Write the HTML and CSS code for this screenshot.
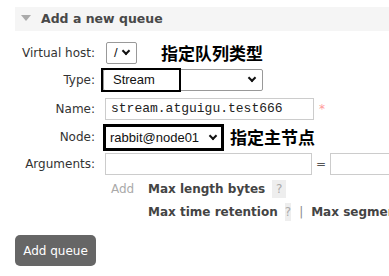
FILE: index.html
```html
<!DOCTYPE html>
<html>
<head>
    <meta charset="UTF-8">
    <title>Add a new queue</title>
    <link rel="stylesheet" href="styles.css">
</head>
<body>
    <div class="section">
        <h2 class="section-title"><span class="arrow"></span>Add a new queue</h2>
        <form class="queue-form">
            <div class="row r-vhost">
                <label>Virtual host:</label>
                <span class="select small">/<span class="chev"></span></span>
                <span class="note">指定队列类型</span>
            </div>
            <div class="row r-type">
                <label>Type:</label>
                <span class="select wide">Stream<span class="chev"></span><span class="mark"></span></span>
            </div>
            <div class="row r-name">
                <label>Name:</label>
                <span class="text-input name">stream.atguigu.test666</span>
                <span class="req">*</span>
            </div>
            <div class="row r-node">
                <label>Node:</label>
                <span class="select node">rabbit@node01<span class="chev"></span></span>
                <span class="note near">指定主节点</span>
            </div>
            <div class="row r-args">
                <label>Arguments:</label>
                <span class="text-input arg"></span>
                <span class="eq">=</span>
                <span class="text-input arg2"></span>
            </div>
            <div class="row hint">
                <label></label>
                <span class="add">Add</span>
                <b>Max length bytes</b>
                <span class="help">?</span>
            </div>
            <div class="row hint">
                <label></label>
                <span class="add"></span>
                <b>Max time retention</b>
                <span class="help">?</span>
                <span class="sep">|</span>
                <b>Max segment size</b>
            </div>
            <button type="button" class="submit">Add queue</button>
        </form>
    </div>
</body>
</html>
```

FILE: styles.css
```css
body {
    margin: 0;
    padding: 7px 0 0 15px;
    font-family: "DejaVu Sans", Verdana, sans-serif;
    font-size: 12px;
    color: #484848;
    background: #fff;
    overflow: hidden;
    white-space: nowrap;
}

.section-title {
    margin: 0;
    height: 24px;
    line-height: 24px;
    background-color: #f5f5f5;
    font-size: 12.5px;
    font-weight: bold;
    color: #484848;
    padding-left: 6px;
}

.arrow {
    display: inline-block;
    width: 0;
    height: 0;
    border-left: 5px solid transparent;
    border-right: 5px solid transparent;
    border-top: 6px solid #aaa;
    margin-right: 10px;
    vertical-align: 2px;
}

.queue-form {
    margin-top: 9px;
}

/* one line of the form */
.row {
    display: flex;
    align-items: center;
}

.row label {
    width: 80px;
    flex: none;
    text-align: right;
    color: #333;
}

.r-vhost { height: 26px; }
.r-type { height: 28px; }
.r-name { height: 29px; }
.r-node { height: 28px; }
.r-args { height: 26px; }
.hint { height: 23px; }

.select,
.text-input {
    display: block;
    flex: none;
    box-sizing: border-box;
    border: 1px solid #999;
    background: #fff;
    height: 22px;
    line-height: 20px;
    color: #111;
    position: relative;
}

.select {
    font-family: "Liberation Sans", Arial, sans-serif;
    font-size: 13px;
    border-radius: 2px;
    padding-left: 7px;
}

.select.small {
    width: 31px;
    margin-left: 11px;
}

.select.wide {
    width: 160px;
    margin-left: 8px;
    padding-left: 9px;
}

.select.node {
    width: 121px;
    height: 27px;
    margin-left: 8px;
    border: 3px solid #000;
    border-radius: 0;
    padding-left: 4px;
    line-height: 21px;
    font-size: 13px;
}

.chev {
    position: absolute;
    right: 7px;
    top: 5px;
    width: 4px;
    height: 4px;
    border-right: 2px solid #111;
    border-bottom: 2px solid #111;
    transform: rotate(45deg);
}

.select.node .chev {
    right: 5px;
    top: 6px;
}

/* black annotation box over the type select */
.mark {
    position: absolute;
    left: -3px;
    top: -2px;
    width: 80px;
    height: 24px;
    border: 2px solid #000;
    box-sizing: border-box;
}

.note {
    font-family: "Noto Sans CJK SC", sans-serif;
    font-weight: bold;
    font-size: 17px;
    line-height: 20px;
    color: #000;
    margin-left: 24px;
}

.note.near {
    margin-left: 6px;
}

.text-input {
    border-color: #ccc;
    margin-left: 10px;
}

.text-input.name {
    width: 209px;
    font-family: "Liberation Mono", "Courier New", monospace;
    font-size: 13px;
    padding-left: 5px;
    color: #222;
}

.text-input.arg {
    width: 207px;
}

.text-input.arg2 {
    width: 70px;
    margin-left: 4px;
}

.req {
    color: #f99;
    margin-left: 5px;
}

.eq {
    margin-left: 4px;
    color: #555;
}

.add {
    display: inline-block;
    width: 37px;
    margin-left: 16px;
    color: #aaa;
    flex: none;
}

.hint b {
    color: #444;
}

.help {
    display: inline-block;
    background: #eee;
    color: #aaa;
    width: 14px;
    text-align: center;
    line-height: 18px;
    margin-left: 7px;
}

.sep {
    color: #888;
    margin: 0 8px 0 8px;
}

.submit {
    display: block;
    margin-top: 12px;
    background-color: #666;
    color: #fff;
    border: none;
    border-radius: 5px;
    font-family: "DejaVu Sans", Verdana, sans-serif;
    font-size: 12px;
    padding: 0;
    width: 81px;
    height: 31px;
}
```
